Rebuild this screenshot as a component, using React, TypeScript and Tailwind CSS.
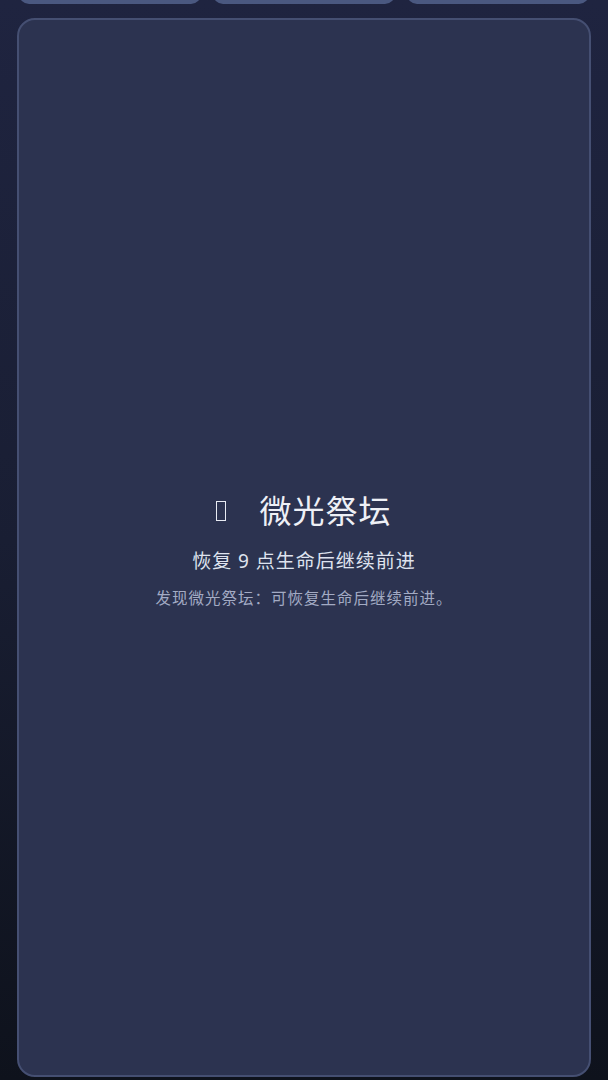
export default function App() {
  return (
    <div
      className="h-[1080px] w-full overflow-hidden bg-gradient-to-b from-[#1f2440] via-[#191e33] to-[#0e121c] px-4"
      style={{ fontFamily: '"Noto Sans", "Noto Sans CJK SC", sans-serif' }}
    >
      {/* tab buttons, scrolled mostly out of view */}
      <div className="-mt-[40px] grid grid-cols-3 gap-3 px-[3px]">
        <div className="h-[44px] rounded-[10px] bg-[#4a5880]" />
        <div className="h-[44px] rounded-[10px] bg-[#4a5880]" />
        <div className="h-[44px] rounded-[10px] bg-[#4a5880]" />
      </div>

      {/* event card */}
      <div className="mx-[1px] mt-[14px] flex h-[1059px] flex-col items-center justify-center rounded-[18px] border-2 border-[#454f72] bg-[#2c3350] pt-[3px]">
        <div className="flex items-center">
          <span className="inline-block h-[20px] w-[10px] border-[1.5px] border-[#e8ebf3]" />
          <span className="ml-[33px] text-[32px] leading-[44px] tracking-[1px] text-[#eef0f6]">
            微光祭坛
          </span>
        </div>
        <div className="mt-[14px] text-[19px] leading-[28px] tracking-[1px] text-[#dfe3ef]">
          恢复 9 点生命后继续前进
        </div>
        <div className="mt-[12px] text-[15.5px] leading-[22px] tracking-[1px] text-[#a3abc4]">
          发现微光祭坛：可恢复生命后继续前进。
        </div>
      </div>
    </div>
  );
}
